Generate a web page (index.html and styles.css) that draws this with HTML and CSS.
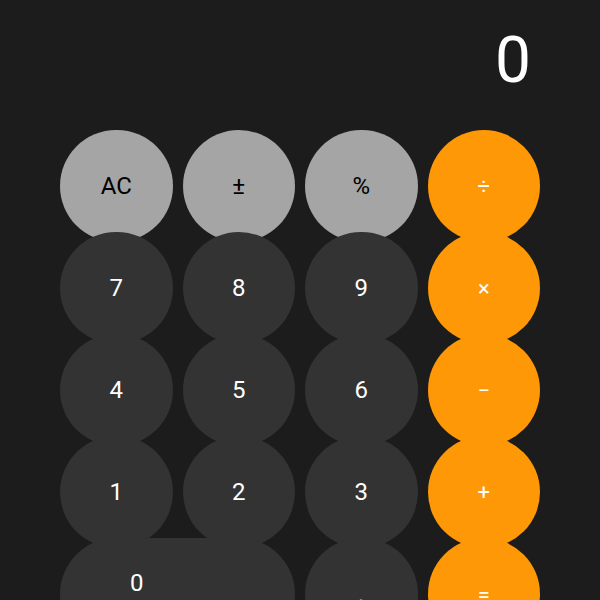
FILE: index.html
```html
<!DOCTYPE html>
<html>
<head>
<meta charset="utf-8">
<link rel="stylesheet" href="styles.css">
</head>
<body>
<div class="calc">
  <div class="display">0</div>
  <div class="keys">
    <div class="key light">AC</div>
    <div class="key light">±</div>
    <div class="key light">%</div>
    <div class="key op">÷</div>
    <div class="key">7</div>
    <div class="key">8</div>
    <div class="key">9</div>
    <div class="key op">×</div>
    <div class="key">4</div>
    <div class="key">5</div>
    <div class="key">6</div>
    <div class="key op">−</div>
    <div class="key">1</div>
    <div class="key">2</div>
    <div class="key">3</div>
    <div class="key op">+</div>
    <div class="key zero">0</div>
    <div class="key">.</div>
    <div class="key op">=</div>
  </div>
</div>
</body>
</html>
```
FILE: styles.css
```css
html, body {
  margin: 0;
  padding: 0;
  background: #1c1c1c;
  height: 100%;
  overflow: hidden;
}
body {
  font-family: Roboto, "Liberation Sans", sans-serif;
}
.calc {
  width: 480px;
  margin-left: 60px;
  padding-top: 29px;
}
.display {
  color: #ffffff;
  font-size: 64px;
  line-height: 64px;
  text-align: right;
  padding-right: 9px;
  margin-bottom: 37px;
}
.keys {
  display: grid;
  grid-template-columns: repeat(4, 112.5px);
  grid-auto-rows: 102px;
  column-gap: 10px;
}
.key {
  height: 112px;
  border-radius: 56px;
  background: #333333;
  color: #ffffff;
  font-size: 24px;
  display: flex;
  align-items: center;
  justify-content: center;
}
.key.light {
  background: #a5a5a5;
  color: #000000;
}
.key.op {
  background: #ff9806;
  color: #ffffff;
  font-size: 22px;
}
.key.zero {
  grid-column: span 2;
  justify-content: flex-start;
  padding-left: 70px;
  padding-bottom: 22px;
  box-sizing: border-box;
}
```
